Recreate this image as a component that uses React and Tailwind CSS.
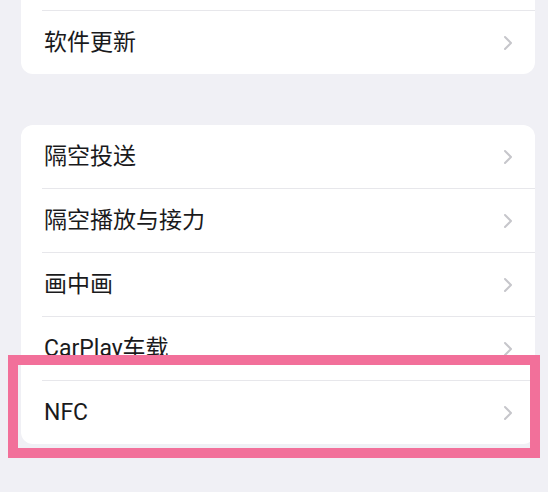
const Chevron = () => (
  <svg width="10" height="16" viewBox="0 0 10 16" fill="none">
    <path d="M2 2l6 6-6 6" stroke="#c6c6cb" strokeWidth="2" strokeLinecap="round" strokeLinejoin="round" />
  </svg>
);

const Row = ({ label }) => (
  <div className="flex items-center justify-between h-[63px] pl-[23px] pr-[22px]">
    <span className="text-[23px] leading-none text-[#1a1a1c]">{label}</span>
    <Chevron />
  </div>
);

const Separator = () => <div className="h-px ml-[21px] bg-[#e7e7eb]" />;

const Group = ({ items, className }) => (
  <div className={`bg-white rounded-[12px] overflow-hidden ${className || ''}`}>
    {items.map((label, i) => (
      <div key={i}>
        {i > 0 && <Separator />}
        {label === null ? <div className="h-[63px]" /> : <Row label={label} />}
      </div>
    ))}
  </div>
);

export default function App() {
  return (
    <div
      className="relative w-[548px] h-[492px] overflow-hidden bg-[#f0f0f5] pl-[21px] pr-[13px]"
      style={{ fontFamily: 'Roboto, "Noto Sans CJK SC", sans-serif' }}
    >
      <Group className="-mt-[53px]" items={[null, '软件更新']} />
      <Group className="mt-[51px]" items={['隔空投送', '隔空播放与接力', '画中画', 'CarPlay车载', 'NFC']} />

      {/* highlight frame around the NFC row */}
      <div className="absolute left-[8px] top-[355px] w-[532px] h-[103px] border-[10px] border-[#f2709a]" />
    </div>
  );
}
